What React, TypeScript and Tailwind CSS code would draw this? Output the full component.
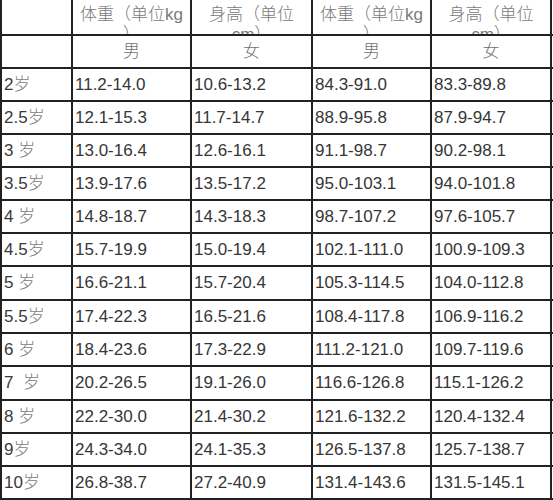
import React from 'react';

const rows: { age: string; unit: string; cells: string[]; tall?: boolean }[] = [
  { age: '2', unit: '岁', cells: ['11.2-14.0', '10.6-13.2', '84.3-91.0', '83.3-89.8'] },
  { age: '2.5', unit: '岁', cells: ['12.1-15.3', '11.7-14.7', '88.9-95.8', '87.9-94.7'] },
  { age: '3 ', unit: '岁', cells: ['13.0-16.4', '12.6-16.1', '91.1-98.7', '90.2-98.1'] },
  { age: '3.5', unit: '岁', cells: ['13.9-17.6', '13.5-17.2', '95.0-103.1', '94.0-101.8'] },
  { age: '4 ', unit: '岁', cells: ['14.8-18.7', '14.3-18.3', '98.7-107.2', '97.6-105.7'] },
  { age: '4.5', unit: '岁', cells: ['15.7-19.9', '15.0-19.4', '102.1-111.0', '100.9-109.3'] },
  { age: '5 ', unit: '岁', cells: ['16.6-21.1', '15.7-20.4', '105.3-114.5', '104.0-112.8'], tall: true },
  { age: '5.5', unit: '岁', cells: ['17.4-22.3', '16.5-21.6', '108.4-117.8', '106.9-116.2'] },
  { age: '6 ', unit: '岁', cells: ['18.4-23.6', '17.3-22.9', '111.2-121.0', '109.7-119.6'] },
  { age: '7  ', unit: '岁', cells: ['20.2-26.5', '19.1-26.0', '116.6-126.8', '115.1-126.2'], tall: true },
  { age: '8 ', unit: '岁', cells: ['22.2-30.0', '21.4-30.2', '121.6-132.2', '120.4-132.4'] },
  { age: '9', unit: '岁', cells: ['24.3-34.0', '24.1-35.3', '126.5-137.8', '125.7-138.7'] },
  { age: '10', unit: '岁', cells: ['26.8-38.7', '27.2-40.9', '131.4-143.6', '131.5-145.1'] },
];

// column widths incl. the 2px left border of each cell
const widths = ['w-[71px]', 'w-[119px]', 'w-[121px]', 'w-[119px]', 'w-[122px]'];

const cjk = { fontFamily: '"Liberation Sans", "Noto Sans CJK SC", sans-serif' };

function Cell({ i, className = '', children }: { i: number; className?: string; children?: React.ReactNode }) {
  return (
    <div
      className={`${widths[i]} shrink-0 h-full border-l-2 border-[#222] ${i === 4 ? 'border-r-2' : ''} ${className}`}
    >
      {children}
    </div>
  );
}

export default function App() {
  return (
    <div className="w-[553px] h-[500px] bg-white overflow-hidden" style={cjk}>
      {/* header */}
      <div className="flex h-[36px] border-b-2 border-[#222]">
        <Cell i={0} />
        {['体重（单位kg', '身高（单位', '体重（单位kg', '身高（单位'].map((t, k) => (
          <Cell key={k} i={k + 1} className="overflow-hidden">
            <div className="pt-[5px] text-center text-[17px] leading-[20px] text-[#7a7a7a] font-light">
              {t}
              <br />
              {k % 2 === 0 ? '）' : 'cm）'}
            </div>
          </Cell>
        ))}
      </div>

      {/* gender row */}
      <div className="flex h-[33px] border-b-2 border-[#222]">
        <Cell i={0} />
        {['男', '女', '男', '女'].map((t, k) => (
          <Cell key={k} i={k + 1} className="flex items-center justify-center">
            <span className="text-[17px] text-[#707070] font-light">{t}</span>
          </Cell>
        ))}
      </div>

      {rows.map((r, idx) => (
        <div
          key={idx}
          className={`flex border-b-2 border-[#222] ${r.tall ? 'h-[34px]' : 'h-[33px]'}`}
        >
          <Cell i={0} className="flex items-center pl-[2px]">
            <span className="text-[17px] whitespace-pre text-[#3a3a3a]">
              {r.age}
              <span className="text-[#808080] font-light">{r.unit}</span>
            </span>
          </Cell>
          {r.cells.map((c, k) => (
            <Cell key={k} i={k + 1} className="flex items-center pl-[2px]">
              <span className="text-[17px] text-[#363636]">{c}</span>
            </Cell>
          ))}
        </div>
      ))}
    </div>
  );
}
